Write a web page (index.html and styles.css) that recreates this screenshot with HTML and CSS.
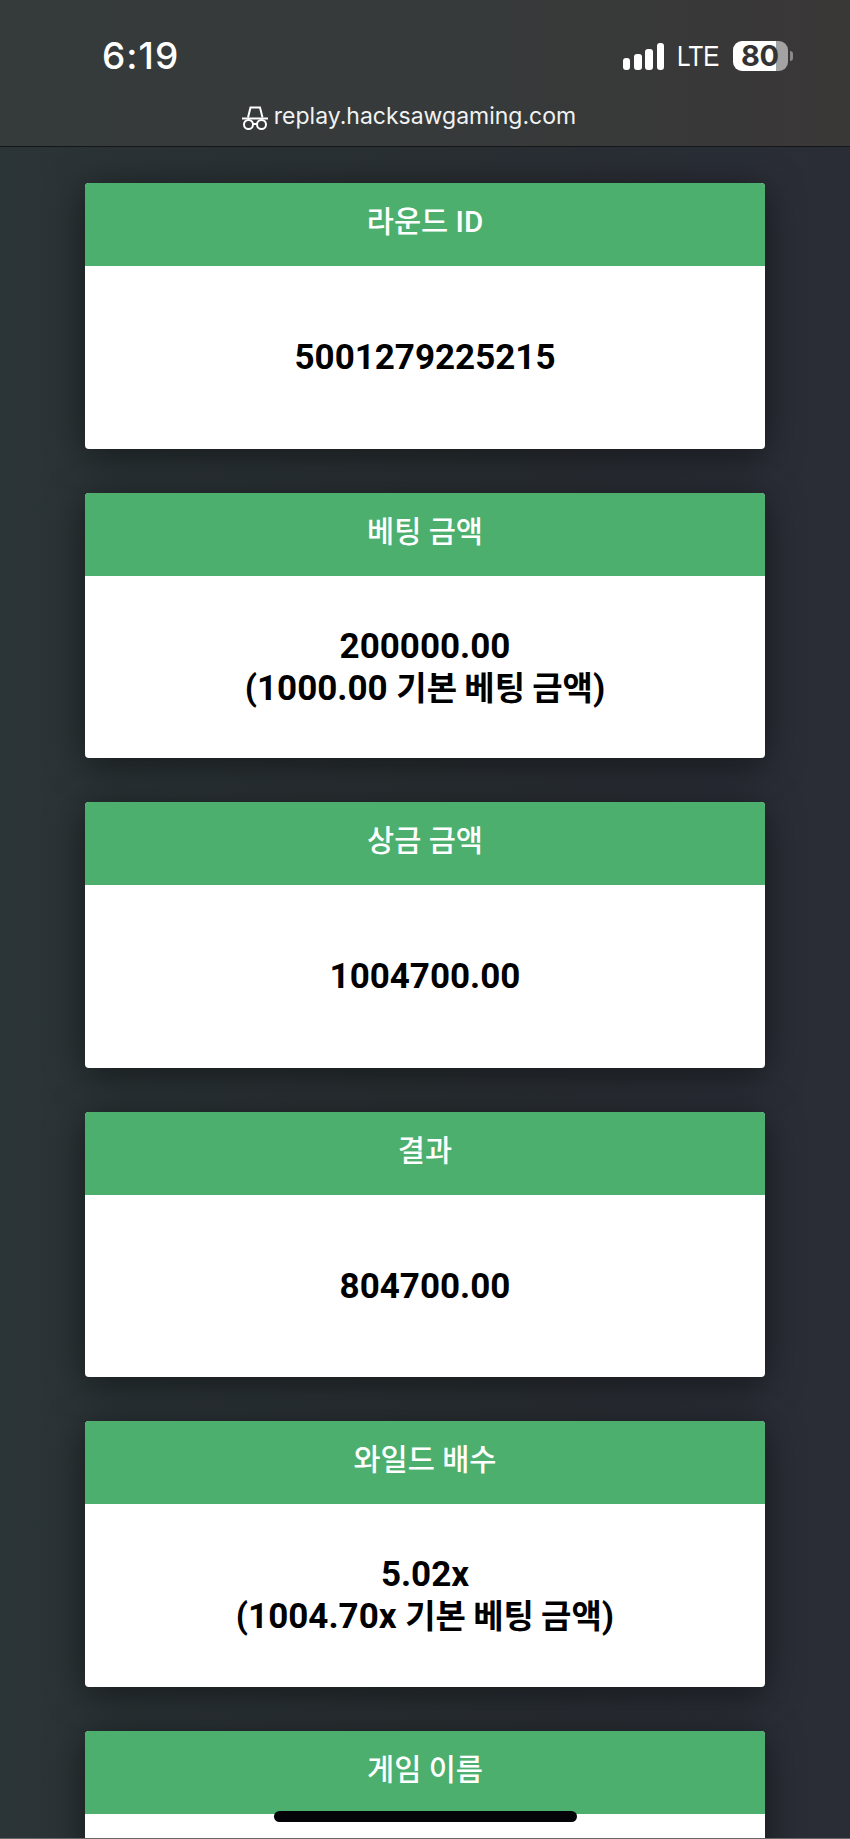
FILE: index.html
```html
<!DOCTYPE html>
<html lang="ko">
<head>
<meta charset="utf-8">
<title>Round replay</title>
<link rel="stylesheet" href="styles.css">
</head>
<body>
<div class="screen">
  <header class="topbar">
    <div class="status">
      <span class="time">6:19</span>
      <div class="indicators">
        <div class="signal"><i class="b1"></i><i class="b2"></i><i class="b3"></i><i class="b4"></i></div>
        <span class="lte">LTE</span>
        <div class="battery"><span class="level">80</span></div>
        <span class="nub"></span>
      </div>
    </div>
    <div class="address">
      <svg class="spy" width="26" height="24" viewBox="0 0 26 24" fill="none" stroke="#fff" stroke-width="2">
        <path d="M6 11.5 8.5 1.5H18L20.500 11.500"/>
        <path d="M0 12.500H26"/>
        <circle cx="6.500" cy="18.500" r="4.500"/>
        <circle cx="19.500" cy="18.500" r="4.500"/>
        <path d="M11 18h4"/>
      </svg>
      <span class="url">replay.hacksawgaming.com</span>
    </div>
  </header>
  <main class="cards">
    <section class="card"><h2 class="card-title">라운드 ID</h2><div class="card-body"><p class="value">5001279225215</p></div></section>
    <section class="card"><h2 class="card-title">베팅 금액</h2><div class="card-body"><p class="value">200000.00<br>(1000.00 <span class="ko">기본 베팅 금액</span>)</p></div></section>
    <section class="card"><h2 class="card-title">상금 금액</h2><div class="card-body"><p class="value">1004700.00</p></div></section>
    <section class="card"><h2 class="card-title">결과</h2><div class="card-body"><p class="value">804700.00</p></div></section>
    <section class="card"><h2 class="card-title">와일드 배수</h2><div class="card-body"><p class="value">5.02x<br>(1004.70x <span class="ko">기본 베팅 금액</span>)</p></div></section>
    <section class="card"><h2 class="card-title">게임 이름</h2><div class="card-body"></div></section>
  </main>
  <div class="home-indicator"></div>
  <div class="bottom-edge"></div>
</div>
</body>
</html>
```

FILE: styles.css
```css
* { box-sizing: border-box; }
html, body { margin: 0; padding: 0; }
body { background: #262b30; }

.screen {
  position: relative;
  width: 850px;
  height: 1839px;
  overflow: hidden;
  display: flex;
  flex-direction: column;
  background: linear-gradient(90deg, #2b3437 0%, #292f33 50%, #2a2d36 100%);
}

.topbar {
  flex: none;
  height: 147px;
  background: linear-gradient(90deg, #353a3a 0%, #373a3a 60%, #3a3737 100%);
  border-bottom: 1px solid #141617;
  color: #fff;
  position: relative;
  z-index: 2;
}

.status {
  display: flex;
  justify-content: space-between;
  align-items: center;
  height: 72px;
  padding: 40px 57px 0 102px;
}
.time {
  font: 500 37px/32px Inter, "Liberation Sans", sans-serif;
  letter-spacing: 1px;
}
.indicators { display: flex; align-items: center; }
.signal { display: flex; align-items: flex-end; gap: 3.700px; height: 27px; }
.signal i { display: block; width: 7.500px; background: #fff; border-radius: 3px; }
.b1 { height: 12px; }
.b2 { height: 16px; }
.b3 { height: 21px; }
.b4 { height: 27px; }
.lte {
  display: block;
  width: 42px;
  margin-left: 13px;
  font: 400 29px/30px "Liberation Sans", sans-serif;
  transform: scaleX(.83);
  transform-origin: left center;
}
.battery {
  margin-left: 14px;
  width: 55px;
  height: 30px;
  border-radius: 9px;
  background: linear-gradient(90deg, #fff 0 78%, #a3a3a3 78% 100%);
  display: flex;
  align-items: center;
  padding-left: 8px;
}
.level {
  font: 700 29px/30px Inter, "Liberation Sans", sans-serif;
  color: #333;
  letter-spacing: -.5px;
}
.nub {
  width: 3px;
  height: 10px;
  margin-left: 2px;
  background: #8a8a8a;
  border-radius: 0 3px 3px 0;
}

.address {
  display: flex;
  justify-content: center;
  align-items: center;
  gap: 6px;
  height: 34px;
  margin-top: 27px;
  padding-right: 32px;
}
.spy { flex: none; margin-top: 4px; }
.url {
  font: 400 23px/30px Inter, "Liberation Sans", sans-serif;
  color: #f1f2f2;
}

.cards {
  flex: none;
  display: flex;
  flex-direction: column;
  align-items: center;
  gap: 44px;
  padding-top: 36px;
}
.card {
  flex: none;
  width: 680px;
  height: 265.500px;
  border-radius: 4px;
  overflow: hidden;
  background: #fff;
  box-shadow: 0 6px 36px rgba(0, 0, 0, .5);
}
.card-title {
  margin: 0;
  height: 83px;
  padding-top: 19px;
  text-align: center;
  background: #4caf6e;
  color: #fff;
  font: 500 29.500px/40px Roboto, "Noto Sans CJK KR", sans-serif;
}
.card-body {
  height: 182.500px;
  padding-top: 2px;
  display: flex;
  justify-content: center;
  align-items: center;
  text-align: center;
  color: #000;
  font: 700 35px/42px Roboto, "Noto Sans CJK KR", sans-serif;
}
.value { margin: 0; }
.ko { font-size: 33px; line-height: 1; word-spacing: -1px; }

.home-indicator {
  position: absolute;
  left: 274px;
  top: 1811px;
  width: 303px;
  height: 11px;
  border-radius: 6px;
  background: #040408;
}
.bottom-edge {
  position: absolute;
  left: 0;
  right: 0;
  bottom: 0;
  height: 1px;
  background: #666;
}
```
